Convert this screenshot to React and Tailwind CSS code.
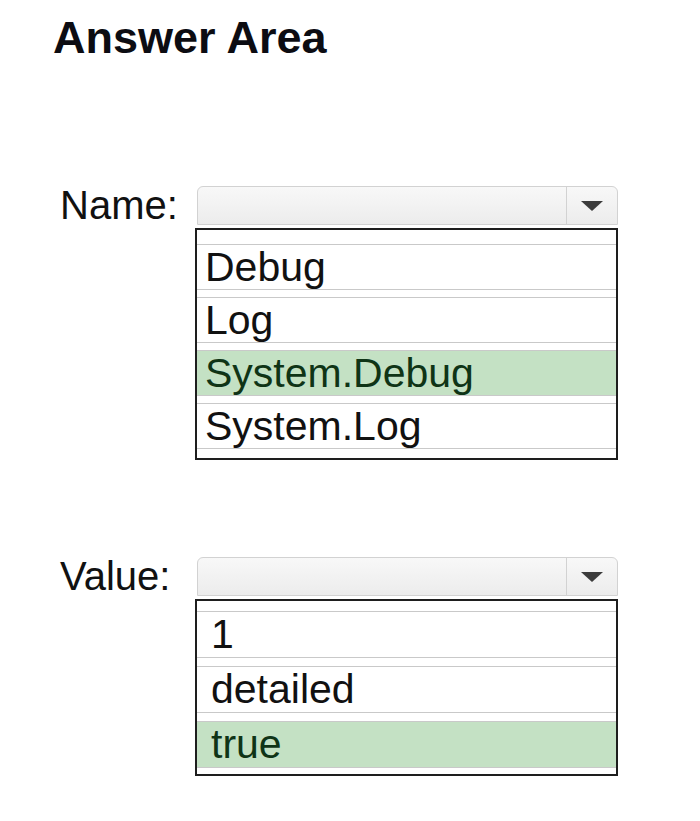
const nameOptions = [
  { label: 'Debug' },
  { label: 'Log' },
  { label: 'System.Debug', selected: true },
  { label: 'System.Log' },
];

const valueOptions = [
  { label: '1' },
  { label: 'detailed' },
  { label: 'true', selected: true },
];

function Arrow() {
  return (
    <svg width="24" height="12" viewBox="0 0 24 12">
      <path d="M1 1 L23 1 L12 11 Z" fill="#3c3c3c" />
    </svg>
  );
}

function Select() {
  return (
    <div className="ml-[2px] flex h-[39px] w-[421px] rounded-t-[6px] border border-[#d2d2d2] bg-gradient-to-b from-[#f8f8f8] to-[#ececec]">
      <div className="flex-1" />
      <div className="flex w-[51px] items-center justify-center border-l border-[#d2d2d2]">
        <Arrow />
      </div>
    </div>
  );
}

function OptionList({ options, padTop, padBottom, gap, itemH, textPad }) {
  return (
    <div className={`mt-[3px] flex w-[423px] flex-col border-2 border-[#1e1e1e] bg-white ${padTop} ${padBottom} ${gap}`}>
      {options.map((o) => (
        <div
          key={o.label}
          className={`border-y border-[#c9c9c9] ${itemH} ${textPad} text-[41px] ${
            o.selected ? 'bg-[#c4e1c4] text-[#0f3416]' : 'bg-white text-[#111]'
          }`}
        >
          {o.label}
        </div>
      ))}
    </div>
  );
}

export default function App() {
  return (
    <div className="min-h-screen bg-white font-['Liberation_Sans',Arial,sans-serif] text-[#111]">
      <h1 className="pl-[53px] pt-[16px] text-[45px] font-bold leading-[44px] text-[#0c0c12]">Answer Area</h1>

      <div className="mt-[126px] flex">
        <div className="w-[195px] pl-[60px] text-[40px] leading-[39px]">Name:</div>
        <div className="flex flex-col">
          <Select />
          <OptionList
            options={nameOptions}
            padTop="pt-[14px]"
            padBottom="pb-[9px]"
            gap="gap-[7px]"
            itemH="h-[46px] leading-[44px]"
            textPad="pl-[8px]"
          />
        </div>
      </div>

      <div className="mt-[97px] flex">
        <div className="w-[195px] pl-[60px] text-[40px] leading-[39px]">Value:</div>
        <div className="flex flex-col">
          <Select />
          <OptionList
            options={valueOptions}
            padTop="pt-[10px]"
            padBottom="pb-[6px]"
            gap="gap-[8px]"
            itemH="h-[47px] leading-[45px]"
            textPad="pl-[14px]"
          />
        </div>
      </div>
    </div>
  );
}
